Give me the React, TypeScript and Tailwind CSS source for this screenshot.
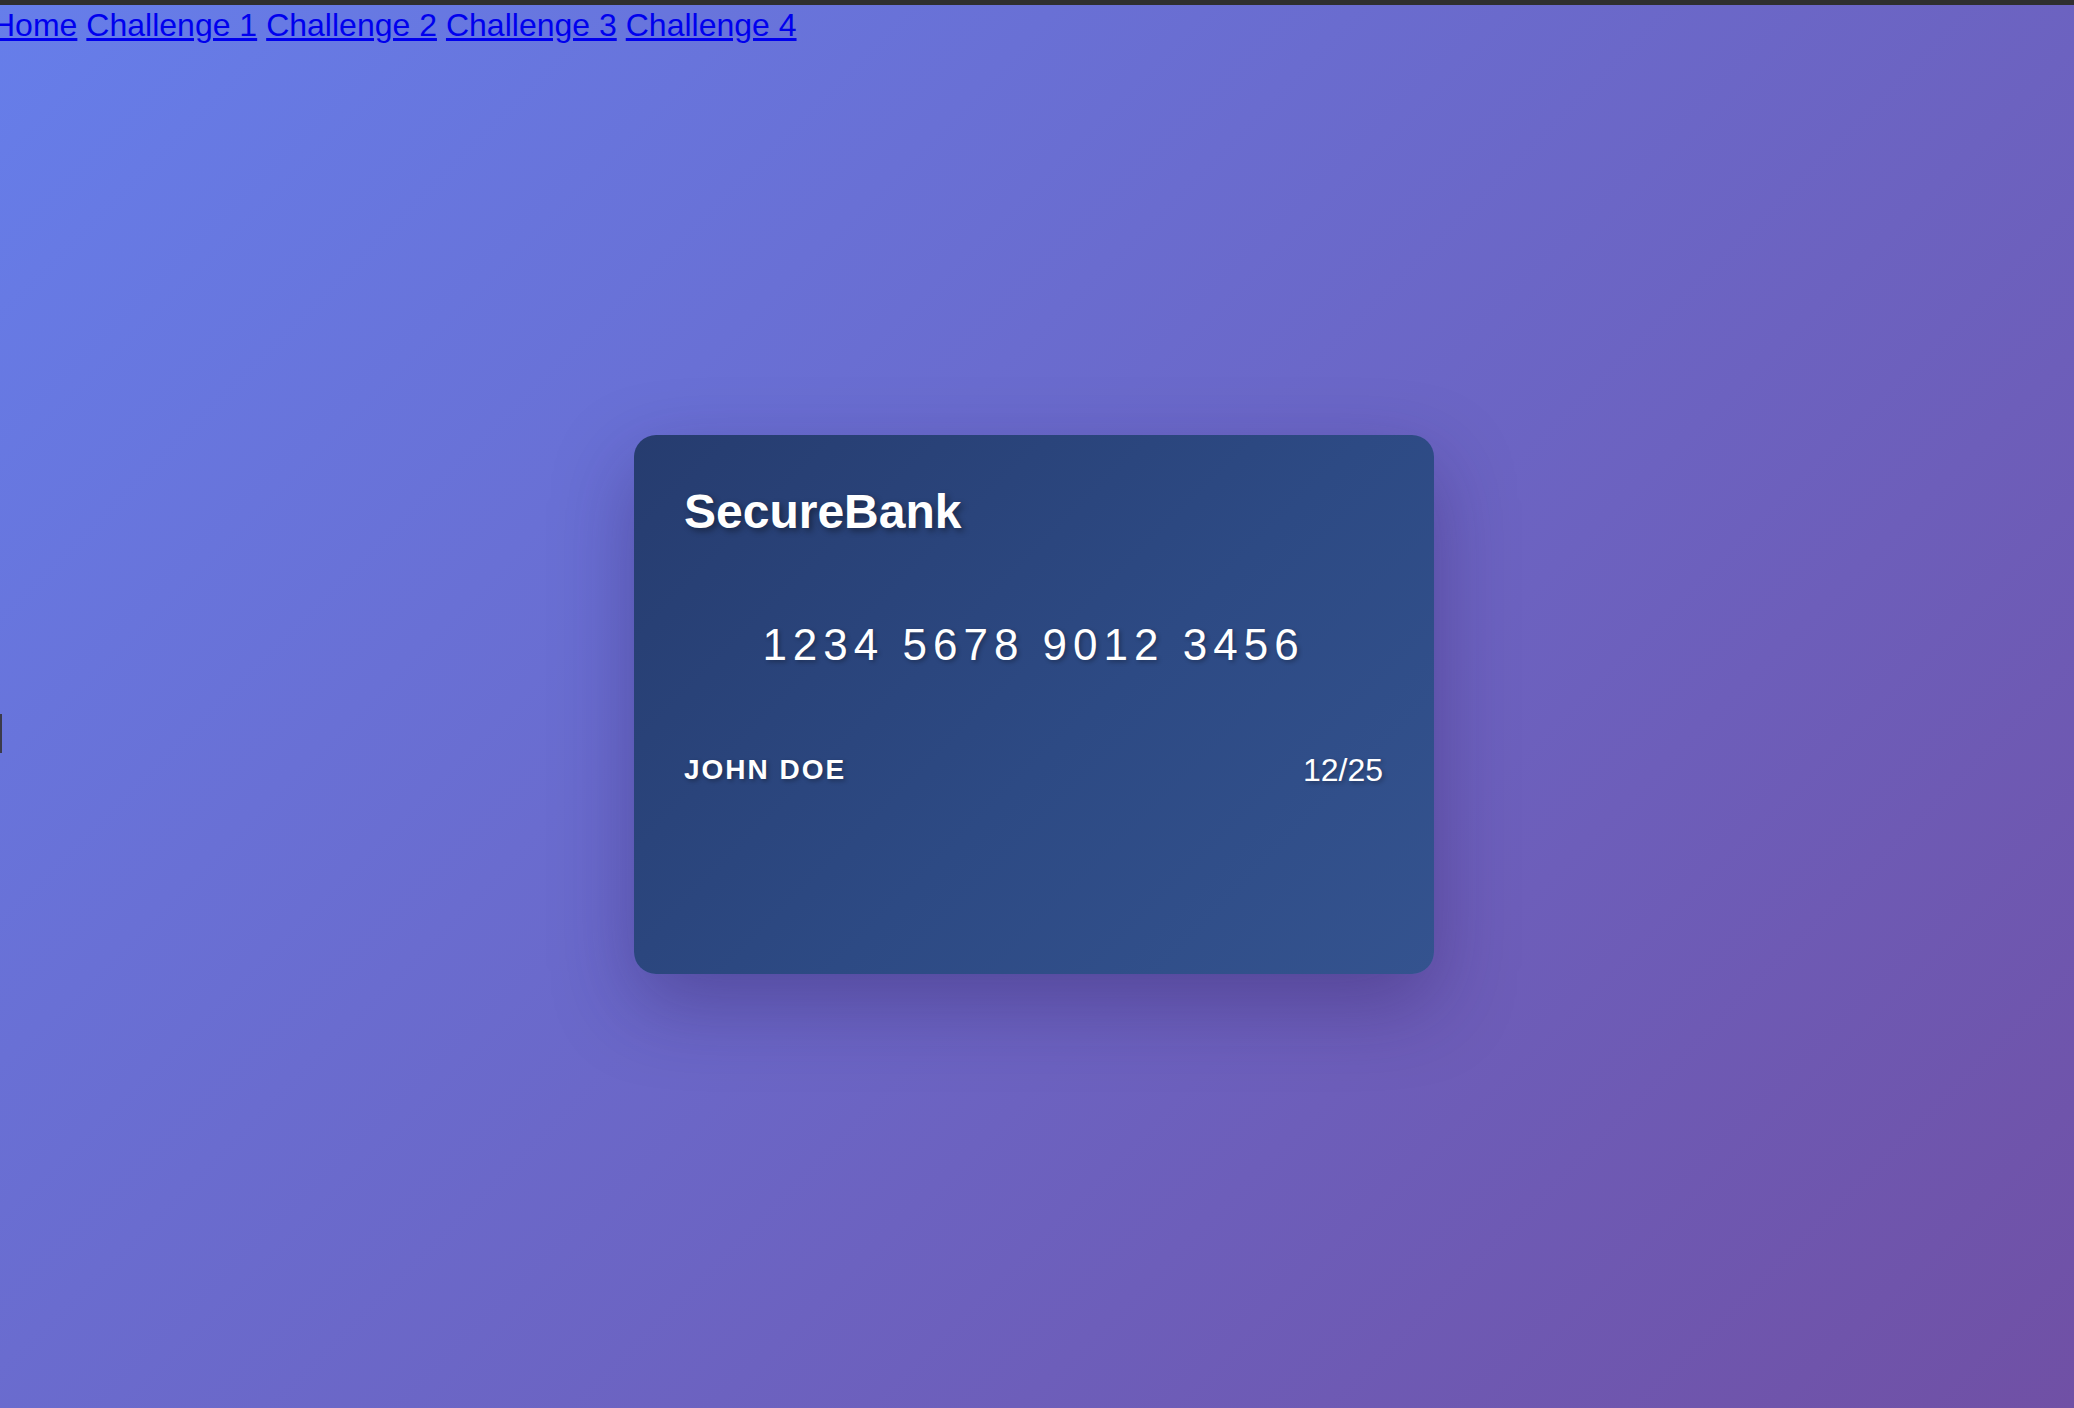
export default function App() {
  return (
    <div className="relative min-h-[1408px] bg-[linear-gradient(135deg,#667eea_0%,#7050a5_100%)] font-['Liberation_Sans',Arial,sans-serif]">
      <div className="h-[5px] bg-[#2f2f2f]" />
      <nav className="-ml-[8px] flex gap-[9px] pt-[2px] text-[32px] leading-[37px] text-[#0000ee] whitespace-nowrap">
        <a href="#" className="underline">Home</a>
        <a href="#" className="underline">Challenge 1</a>
        <a href="#" className="underline">Challenge 2</a>
        <a href="#" className="underline">Challenge 3</a>
        <a href="#" className="underline">Challenge 4</a>
      </nav>

      {/* stray marker on the left edge */}
      <div className="absolute left-0 top-[714px] h-[39px] w-[2px] bg-[#3b3b4a]" />

      <main className="flex h-[1364px] items-center justify-center pb-[44px]">
        <div className="mr-[6px] h-[539px] w-[800px] rounded-[22px] bg-[linear-gradient(135deg,#263c6f_0%,#2d4a84_55%,#34538f_100%)] pl-[50px] pr-[51px] pt-[49px] text-white shadow-[0_30px_80px_rgba(40,20,80,0.35)]">
          <h1 className="text-[48px] font-bold leading-[55px] [text-shadow:3px_3px_6px_rgba(0,0,0,0.4)]">
            SecureBank
          </h1>
          <div className="mt-[80px] mb-[82px] text-center text-[44px] leading-[51px] tracking-[6px] [text-shadow:2px_2px_4px_rgba(0,0,0,0.3)]">
            1234 5678 9012 3456
          </div>
          <div className="flex items-center justify-between">
            <span className="text-[28px] font-bold uppercase leading-[32px] tracking-[2px] [text-shadow:2px_2px_4px_rgba(0,0,0,0.3)]">
              John Doe
            </span>
            <span className="text-[32px] leading-[37px] [text-shadow:2px_2px_4px_rgba(0,0,0,0.3)]">
              12/25
            </span>
          </div>
        </div>
      </main>
    </div>
  );
}
